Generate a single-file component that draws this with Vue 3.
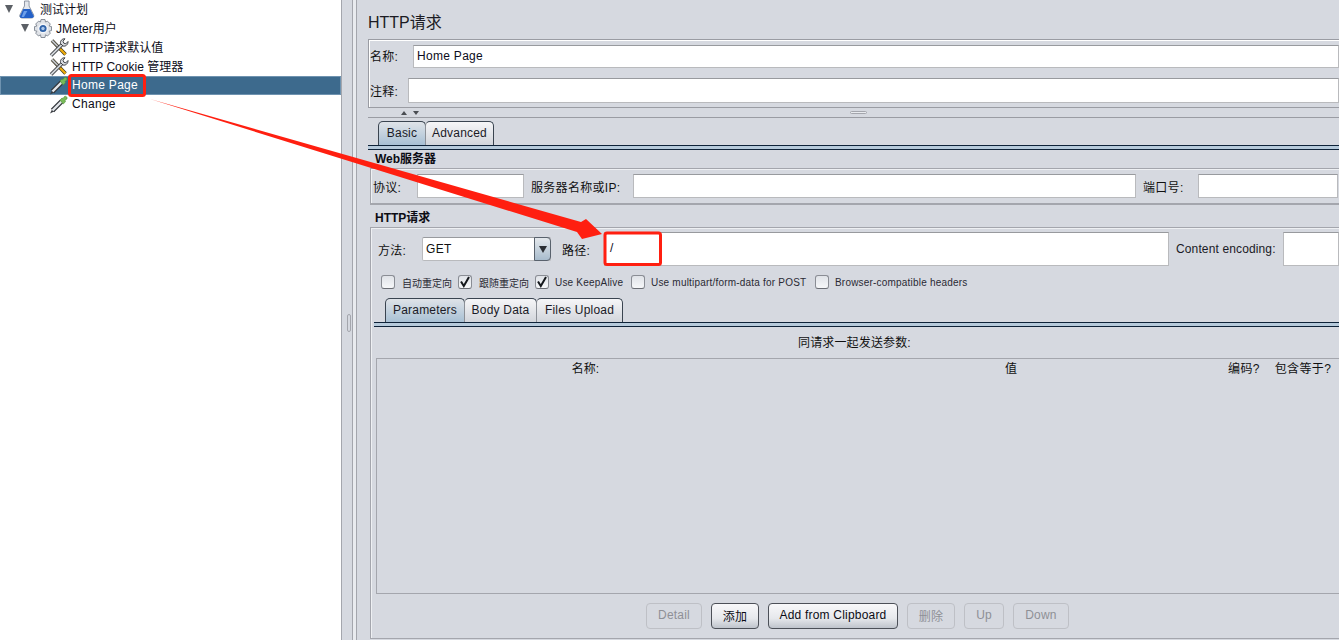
<script setup>
const tree = [
  { label: '测试计划', indent: 17, icon: 'flask', arrow: 5 },
  { label: 'JMeter用户', indent: 33, icon: 'gear', arrow: 21 },
  { label: 'HTTP请求默认值', indent: 49, icon: 'tools' },
  { label: 'HTTP Cookie 管理器', indent: 49, icon: 'tools' },
  { label: 'Home Page', indent: 49, icon: 'pipette', selected: true, latin: true },
  { label: 'Change', indent: 49, icon: 'pipette', latin: true }
]

const checks = [
  { label: '自动重定向', on: false, width: 77, cjk: true },
  { label: '跟随重定向', on: true, width: 77, cjk: true },
  { label: 'Use KeepAlive', on: true, width: 96 },
  { label: 'Use multipart/form-data for POST', on: false, width: 184 },
  { label: 'Browser-compatible headers', on: false, width: 170 }
]

const buttons = [
  { label: 'Detail', width: 56, off: true },
  { label: '添加', width: 48 },
  { label: 'Add from Clipboard', width: 130 },
  { label: '删除', width: 48, off: true },
  { label: 'Up', width: 40, off: true },
  { label: 'Down', width: 56, off: true }
]
</script>

<template>
  <div class="app">
    <aside class="tree">
      <div v-for="row in tree" :key="row.label" class="node" :class="{ selected: row.selected }">
        <span v-if="row.arrow" class="twist" :style="{ left: row.arrow + 'px' }"></span>
        <svg class="ico" :style="{ marginLeft: row.indent + 'px' }" width="20" height="19" viewBox="0 0 20 19">
          <g v-if="row.icon === 'flask'" transform="scale(1.15 1)">
            <path d="M6.500 1h4v5l4 9c.5 1.500-.5 3-2 3H4.500c-1.500 0-2.500-1.500-2-3l4-9z" fill="#e4e7ec" stroke="#7f8896" stroke-width=".8"/>
            <path d="M5.500 9h6l3 7c.2 1-.5 2-1.500 2H4c-1 0-1.700-1-1.500-2z" fill="#2461c8"/>
            <path d="M6 11h3l-3 6H4z" fill="#6ea0ea"/>
          </g>
          <template v-else-if="row.icon === 'gear'">
            <path d="M8 .5h4l.5 2.500 2-.8 2.800 2.800-1.200 2 2.400.6v4l-2.400.6 1.200 2-2.800 2.800-2-1.200-.5 2.700H8l-.5-2.700-2 1.200-2.800-2.800 1.200-2L1.500 11.600v-4l2.400-.6-1.200-2 2.800-2.800 2 .8z" fill="#dfe2e7" stroke="#7d8590" stroke-width=".9"/>
            <circle cx="10" cy="9.500" r="4.300" fill="#2f62a8" stroke="#f4f6f9" stroke-width="1.400"/>
            <circle cx="10" cy="9.500" r="1.700" fill="#a9c6ea"/>
          </template>
          <template v-else-if="row.icon === 'tools'">
            <path d="M3 2.500L16.500 16.500" stroke="#3a3420" stroke-width="3.400" fill="none"/>
            <path d="M3 2.500L9 8.700" stroke="#bfc3c9" stroke-width="1.800" fill="none"/>
            <path d="M9 8.700L16.500 16.500" stroke="#f0ae0c" stroke-width="2.200" fill="none"/>
            <path d="M2 17.500L13 6.500" stroke="#2e3136" stroke-width="3.600" fill="none"/>
            <path d="M2 17.500L13 6.500" stroke="#cfd3d8" stroke-width="1.800" fill="none"/>
            <path d="M11.500 5.500c-.5-2.500 1.500-5 4.500-4.700l-2 2.400.8 2 2 .6 2.200-2.300c.3 3-2.500 5.300-5 4.500z" fill="#d8dbe0" stroke="#2e3136" stroke-width=".9"/>
          </template>
          <template v-else>
            <path d="M1 18.500L3.500 13.500 6 16z" fill="#3a3d42"/>
            <path d="M3.500 15.500L12.500 6.500" stroke="#33373c" stroke-width="4.600" fill="none"/>
            <path d="M3.500 15.500L12.500 6.500" stroke="#e3e6ea" stroke-width="2.400" fill="none"/>
            <path d="M11 5l2-2 1 .5 1.500-2c1.300-.9 3.400 1 2.400 2.500l-2 1.500.6 1.300-2.300 2.200z" fill="#78bb58" stroke="#538f3b" stroke-width=".6"/>
          </template>
        </svg>
        <span class="node-text" :class="{ latin: row.latin }">{{ row.label }}</span>
      </div>
    </aside>

    <div class="divider">
      <span class="grip"></span>
    </div>

    <main class="main">
      <h1 class="title">HTTP请求</h1>

      <section class="name-box">
        <div class="name-row first">
          <label class="lbl name-lbl">名称:</label>
          <div class="field grow txt">Home Page</div>
        </div>
        <div class="name-row second">
          <label class="lbl note-lbl">注释:</label>
          <div class="field grow"></div>
        </div>
      </section>

      <div class="split">
        <i class="tri up"></i><i class="tri down"></i>
        <span class="split-grip"></span>
      </div>

      <div class="tabs top-tabs">
        <div class="tab active" style="width: 48px">Basic</div>
        <div class="tab" style="width: 69px">Advanced</div>
      </div>
      <div class="tab-line"></div>

      <div class="group-title web">Web服务器</div>
      <section class="web-box">
        <label class="lbl" style="width: 44px">协议:</label>
        <div class="field" style="width: 107px"></div>
        <label class="lbl" style="width: 102px; margin-left: 7px">服务器名称或IP:</label>
        <div class="field grow"></div>
        <label class="lbl" style="width: 55px; margin-left: 7px">端口号:</label>
        <div class="field" style="width: 140px; margin-right: 1px"></div>
      </section>

      <div class="group-title http">HTTP请求</div>
      <section class="http-box">
        <div class="path-row">
          <label class="lbl" style="width: 44px">方法:</label>
          <div class="combo">
            <span class="combo-val">GET</span>
            <span class="combo-btn"><i></i></span>
          </div>
          <label class="lbl" style="width: 42px; margin-left: 11px">路径:</label>
          <div class="field grow path txt slash">/</div>
          <label class="lbl enc" style="width: 107px; margin-left: 7px">Content encoding:</label>
          <div class="field path" style="width: 56px"></div>
        </div>

        <div class="check-row">
          <div v-for="c in checks" :key="c.label" class="check" :style="{ width: c.width + 'px' }">
            <span class="box">
              <svg v-if="c.on" width="14" height="14" viewBox="0 0 14 14">
                <path d="M3 6.500l2.800 4.500L11 2" fill="none" stroke="#15181c" stroke-width="2"/>
              </svg>
            </span>
            <span class="check-text" :class="{ cjk: c.cjk }">{{ c.label }}</span>
          </div>
        </div>

        <div class="tabs inner-tabs">
          <div class="tab active" style="width: 80px">Parameters</div>
          <div class="tab" style="width: 73px">Body Data</div>
          <div class="tab" style="width: 87px">Files Upload</div>
        </div>
        <div class="tab-line inner-line"></div>

        <div class="caption">同请求一起发送参数:</div>

        <div class="table">
          <div class="thead">
            <span style="width: 417px">名称:</span>
            <span style="width: 434px">值</span>
            <span class="q" style="width: 46px; margin-left: -7px">编码?</span>
            <span class="q" style="width: 72px">包含等于?</span>
          </div>
        </div>

        <div class="actions">
          <button v-for="b in buttons" :key="b.label" class="btn" :class="{ off: b.off }" :style="{ width: b.width + 'px' }">{{ b.label }}</button>
        </div>
      </section>
    </main>

    <svg class="marks" width="1339" height="640" viewBox="0 0 1339 640">
      <rect x="69.500" y="75.500" width="75" height="20" rx="2" class="mark-box"/>
      <rect x="605" y="233" width="55.500" height="31.500" rx="2" class="mark-box"/>
      <path d="M150 99 L581 222 L586 219 L602 234 L582 239 L577 232 Z" fill="#ff1f10"/>
    </svg>
  </div>
</template>

<style scoped>
.app {
  position: relative;
  display: flex;
  width: 1339px;
  height: 640px;
  overflow: hidden;
  background: #d6d9e0;
  font-family: "Liberation Sans", "Noto Sans CJK SC", sans-serif;
  font-size: 12px;
  color: #111;
}
.tree {
  width: 341px;
  flex: none;
  background: #fff;
}
.node {
  position: relative;
  display: flex;
  align-items: center;
  height: 19px;
  color: #0c0c18;
}
.node.selected {
  background: #3d6a8d;
  color: #fff;
  box-shadow: inset 0 0 0 1px #6f93b0;
}
.node-text {
  margin-left: 3px;
  padding-bottom: 2px;
}
.node-text.latin {
  letter-spacing: .3px;
}
.twist {
  position: absolute;
  top: 5px;
  width: 0;
  height: 0;
  border-left: 4px solid transparent;
  border-right: 4px solid transparent;
  border-top: 8px solid #5c6066;
}
.ico {
  flex: none;
}
.divider {
  position: relative;
  width: 16px;
  flex: none;
  box-sizing: border-box;
  border-left: 1px solid #a4a6ad;
  border-right: 1px solid #a4a6ad;
  background: #d6d9e0;
  box-shadow: inset -3px 0 0 #e9ebef, inset -4px 0 0 #a4a6ad;
}
.grip {
  position: absolute;
  left: 5px;
  top: 314px;
  width: 2px;
  height: 16px;
  border: 1px solid #a4a6ad;
  border-radius: 2px;
}
.main {
  flex: 1;
  min-width: 0;
  padding-left: 11px;
  display: flex;
  flex-direction: column;
}
.title {
  margin: 0;
  height: 39px;
  padding-top: 12px;
  box-sizing: border-box;
  font-size: 16px;
  font-weight: 400;
  line-height: 21px;
  color: #1c1c24;
}
.name-box {
  height: 69px;
  flex: none;
  box-sizing: border-box;
  border: 1px solid #9a9ca3;
  border-right: 0;
  box-shadow: inset 1px 1px 0 #fff;
  padding: 5px 0 0 1px;
}
.name-row {
  display: flex;
  align-items: stretch;
}
.name-row.first {
  height: 23px;
}
.name-row.second {
  height: 25px;
  margin-top: 10px;
}
.name-lbl {
  width: 43px;
  padding-bottom: 2px;
}
.note-lbl {
  width: 38px;
}
.lbl {
  flex: none;
  display: flex;
  align-items: center;
  box-sizing: border-box;
  letter-spacing: .3px;
  color: #111;
}
.field {
  flex: none;
  background: #fff;
  box-sizing: border-box;
  border: 1px solid #b9babd;
  border-top-color: #989a9e;
}
.grow {
  flex: 1;
  min-width: 0;
}
.txt {
  display: flex;
  align-items: center;
  padding-left: 3px;
  padding-bottom: 2px;
  letter-spacing: .3px;
  color: #0c0c20;
}
.slash {
  padding-left: 5px;
}
.split {
  position: relative;
  height: 9px;
  flex: none;
  border-bottom: 1px solid #9a9ca3;
  box-sizing: content-box;
}
.tri {
  position: absolute;
  top: 3px;
  width: 0;
  height: 0;
  border-left: 3px solid transparent;
  border-right: 3px solid transparent;
}
.tri.up {
  left: 33px;
  border-bottom: 4px solid #4a4d52;
}
.tri.down {
  left: 45px;
  border-top: 4px solid #4a4d52;
}
.split-grip {
  position: absolute;
  left: 482px;
  top: 3px;
  width: 17px;
  height: 3px;
  background: #e9ebef;
  border: 1px solid #a4a6ad;
  border-radius: 2px;
  box-sizing: border-box;
}
.tabs {
  display: flex;
  flex: none;
}
.top-tabs {
  height: 24px;
  margin-top: 3px;
  padding-left: 10px;
}
.inner-tabs {
  height: 24px;
  margin-top: 8px;
  padding-left: 13px;
}
.tab {
  box-sizing: border-box;
  display: flex;
  align-items: center;
  justify-content: center;
  padding-bottom: 2px;
  letter-spacing: .2px;
  border: 1px solid #3a4450;
  border-bottom: 0;
  border-left-color: #8c9097;
  border-radius: 5px 5px 0 0;
  background: linear-gradient(#f6f6f8, #d2d5db);
  color: #1a1a26;
  margin-right: -1px;
}
.tab.active {
  background: linear-gradient(#dfe3e8, #a8c0d4);
  border-left-color: #3a4450;
}
.tab-line {
  height: 5px;
  flex: none;
  box-sizing: border-box;
  border-top: 1px solid #0e2238;
  border-bottom: 1px solid #0e2238;
  background: #b6cadb;
}
.inner-line {
  margin-left: 2px;
}
.group-title {
  flex: none;
  display: flex;
  align-items: center;
  box-sizing: border-box;
  font-weight: 700;
  padding-left: 7px;
  color: #0c0c14;
}
.group-title.web {
  height: 18px;
  padding-bottom: 4px;
}
.group-title.http {
  height: 22px;
}
.web-box {
  height: 37px;
  flex: none;
  box-sizing: border-box;
  margin-left: 2px;
  display: flex;
  padding: 5px 0 5px 2px;
  border-top: 1px solid #a4a6ad;
  border-bottom: 2px solid #a4a6ad;
  border-left: 1px solid #a4a6ad;
  box-shadow: inset 1px 1px 0 #eef0f3;
}
.http-box {
  flex: none;
  height: 412px;
  box-sizing: border-box;
  margin-left: 2px;
  border-top: 1px solid #a4a6ad;
  border-left: 1px solid #a4a6ad;
  border-bottom: 1px solid #a4a6ad;
  box-shadow: inset 1px 1px 0 #eef0f3;
  padding: 4px 0 0 1px;
  display: flex;
  flex-direction: column;
}
.path-row {
  height: 34px;
  flex: none;
  display: flex;
  align-items: center;
  padding-left: 6px;
}
.path {
  height: 34px;
}
.lbl.enc {
  color: #1a1a26;
  letter-spacing: .13px;
}
.combo {
  position: relative;
  width: 129px;
  height: 24px;
  flex: none;
  box-sizing: border-box;
  background: #fff;
  border: 1px solid #b9babd;
  border-top-color: #989a9e;
  border-radius: 2px;
  display: flex;
  align-items: center;
  justify-content: space-between;
}
.combo-val {
  padding-left: 3px;
  letter-spacing: .3px;
}
.combo-btn {
  width: 17px;
  height: 24px;
  margin: -1px;
  box-sizing: border-box;
  border: 1px solid #59626d;
  border-radius: 0 4px 4px 0;
  background: linear-gradient(#e4e8ec, #a8bccd);
  display: flex;
  align-items: center;
  justify-content: center;
}
.combo-btn i {
  width: 0;
  height: 0;
  border-left: 4px solid transparent;
  border-right: 4px solid transparent;
  border-top: 7px solid #2a2e33;
}
.check-row {
  height: 16px;
  margin-top: 8px;
  flex: none;
  display: flex;
  padding-left: 9px;
}
.check {
  display: flex;
  align-items: center;
  flex: none;
}
.box {
  width: 14px;
  height: 14px;
  flex: none;
  box-sizing: border-box;
  border: 1px solid #8a8d94;
  border-bottom-color: #6a6d74;
  border-radius: 3px;
  background: linear-gradient(#e0e3e8, #f6f7f9);
  position: relative;
}
.box svg {
  position: absolute;
  left: -1px;
  top: -1px;
}
.check-text {
  margin-left: 6px;
  font-size: 10px;
  letter-spacing: .2px;
  white-space: nowrap;
  color: #2a2a34;
}
.check-text.cjk {
  margin-left: 7px;
  letter-spacing: 0;
}
.caption {
  flex: none;
  height: 31px;
  display: flex;
  align-items: center;
  padding-left: 426px;
  padding-bottom: 2px;
  box-sizing: border-box;
  letter-spacing: .15px;
}
.table {
  flex: none;
  height: 236px;
  margin-left: 4px;
  box-sizing: border-box;
  border: 1px solid #a4a6ad;
  border-right: 0;
}
.thead {
  display: flex;
  height: 19px;
  padding-bottom: 2px;
  box-sizing: border-box;
  align-items: center;
  white-space: nowrap;
}
.thead span {
  flex: none;
  text-align: center;
}
.thead .q {
  letter-spacing: .4px;
}
.actions {
  flex: none;
  display: flex;
  gap: 9px;
  margin-top: 9px;
  padding-left: 274px;
}
.btn {
  height: 26px;
  padding: 0 0 2px;
  box-sizing: border-box;
  font: inherit;
  letter-spacing: .2px;
  color: #0c0c14;
  border: 1px solid #4c5058;
  border-radius: 4px;
  background: linear-gradient(#f8f8fa, #e6e8ec 60%, #bfc4cc);
}
.btn.off {
  color: #8e9096;
  background: #d6d9e0;
  border-color: #bec0c6;
}
.marks {
  position: absolute;
  left: 0;
  top: 0;
  pointer-events: none;
}
.mark-box {
  fill: none;
  stroke: #ff1f10;
  stroke-width: 3;
}
</style>
